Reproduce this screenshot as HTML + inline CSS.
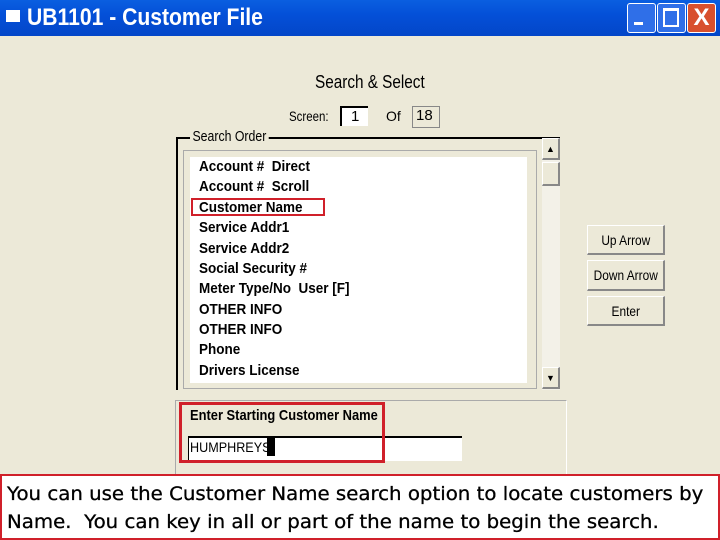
<!DOCTYPE html>
<html><head><style>
body{margin:0;width:720px;height:540px;overflow:hidden;background:#ece9d8;font-family:"Liberation Sans",sans-serif;position:relative}
.a{position:absolute}
.t{background:linear-gradient(#0a5fe0,#0450d8 40%,#0346c8);left:0;top:0;width:720px;height:36px}
.n{font-weight:bold;transform-origin:0 0;transform:scaleX(.82);white-space:nowrap}
.btn{background:#ece9d8;border:1px solid #fff;border-right:2px solid #888;border-bottom:2px solid #888;font-size:14px;text-align:center;box-sizing:border-box;white-space:nowrap}
.btn span{display:inline-block;transform:scaleX(.85)}
.it{left:199px;font-size:15px;transform:scaleX(.9)}
</style></head><body>
<div class="a t"></div>
<div class="a" style="left:6px;top:10px;width:14px;height:12px;background:#fff"></div>
<div class="a n" style="left:27px;top:4px;font-size:24px;color:#fff;transform:scaleX(.88)">UB1101 - Customer File</div>
<div class="a" style="left:627px;top:3px;width:27px;height:28px;background:#2f6fe8;border:1px solid #fff;border-radius:3px"></div>
<div class="a" style="left:634px;top:22px;width:9px;height:3px;background:#fff"></div>
<div class="a" style="left:657px;top:3px;width:27px;height:28px;background:#2f6fe8;border:1px solid #fff;border-radius:3px"></div>
<div class="a" style="left:663px;top:8px;width:12px;height:14px;border:2px solid #fff;border-top-width:3px"></div>
<div class="a" style="left:687px;top:3px;width:27px;height:28px;background:#d8502e;border:1px solid #fff;border-radius:3px;color:#fff;font-size:24px;font-weight:bold;text-align:center;line-height:28px">X</div>
<div class="a n" style="left:315px;top:72px;font-size:18px;font-weight:normal;transform:scaleX(.85)">Search &amp; Select</div>
<div class="a n" style="left:289px;top:108px;font-size:14px;font-weight:normal">Screen:</div>
<div class="a" style="left:340px;top:106px;width:28px;height:20px;background:#fff;border-left:2px solid #000;border-top:2px solid #000;box-sizing:border-box;font-size:15px;padding-left:9px">1</div>
<div class="a" style="left:386px;top:108px;font-size:14px">Of</div>
<div class="a" style="left:412px;top:106px;width:28px;height:22px;border:1px solid #888;box-sizing:border-box;font-size:15px;padding-left:3px">18</div>
<div class="a" style="left:176px;top:137px;width:384px;height:2px;background:#000"></div>
<div class="a" style="left:176px;top:137px;width:2px;height:253px;background:#000"></div>
<div class="a n" style="left:190px;top:128px;background:#ece9d8;font-size:15px;padding:0 3px;font-weight:normal">Search Order</div>
<div class="a" style="left:183px;top:150px;width:354px;height:239px;border:1px solid #aaa;box-sizing:border-box"></div>
<div class="a" style="left:190px;top:157px;width:337px;height:226px;background:#fff"></div>
<div class="a" style="left:542px;top:138px;width:18px;height:252px;background:#f3f1e8"></div>
<div class="a btn" style="left:542px;top:138px;width:18px;height:22px;font-size:9px;line-height:20px">▲</div>
<div class="a btn" style="left:542px;top:162px;width:18px;height:24px"></div>
<div class="a btn" style="left:542px;top:367px;width:18px;height:22px;font-size:9px;line-height:20px">▼</div>
<div class="a n it" style="top:158px">Account #&nbsp; Direct</div>
<div class="a n it" style="top:178px">Account #&nbsp; Scroll</div>
<div class="a n it" style="top:199px">Customer Name</div>
<div class="a n it" style="top:219px">Service Addr1</div>
<div class="a n it" style="top:240px">Service Addr2</div>
<div class="a n it" style="top:260px">Social Security #</div>
<div class="a n it" style="top:280px">Meter Type/No&nbsp; User [F]</div>
<div class="a n it" style="top:301px">OTHER INFO</div>
<div class="a n it" style="top:321px">OTHER INFO</div>
<div class="a n it" style="top:341px">Phone</div>
<div class="a n it" style="top:362px">Drivers License</div>
<div class="a" style="left:191px;top:198px;width:134px;height:18px;border:2px solid #d0202a;box-sizing:border-box"></div>
<div class="a btn" style="left:587px;top:225px;width:78px;height:30px;line-height:28px"><span>Up Arrow</span></div>
<div class="a btn" style="left:587px;top:260px;width:78px;height:31px;line-height:29px"><span>Down Arrow</span></div>
<div class="a btn" style="left:587px;top:296px;width:78px;height:30px;line-height:28px"><span>Enter</span></div>
<div class="a" style="left:175px;top:400px;width:390px;height:80px;border:1px solid #fff;border-top-color:#aaa;border-left-color:#aaa"></div>
<div class="a n" style="left:190px;top:407px;font-size:15px;transform:scaleX(.86)">Enter Starting Customer Name</div>
<div class="a" style="left:188px;top:436px;width:274px;height:25px;background:#fff;border-top:2px solid #000;border-left:1px solid #000;box-sizing:border-box"></div>
<div class="a" style="left:190px;top:439px;font-size:14px;transform:scaleX(.9);transform-origin:0 0">HUMPHREYS</div>
<div class="a" style="left:267px;top:438px;width:8px;height:18px;background:#000"></div>
<div class="a" style="left:179px;top:402px;width:206px;height:61px;border:3px solid #d0202a;box-sizing:border-box"></div>
<div class="a" style="left:0;top:474px;width:720px;height:66px;background:#fff;border:2px solid #d0202a;box-sizing:border-box"></div>
<div class="a" style="left:7px;top:480px;font-family:'DejaVu Sans',sans-serif;font-size:19px;line-height:28px;color:#000;white-space:nowrap;-webkit-text-stroke:0.3px #000;transform:scaleX(1.04);transform-origin:0 0">You can use the Customer Name search option to locate customers by<br>Name.&nbsp; You can key in all or part of the name to begin the search.</div>
</body></html>
